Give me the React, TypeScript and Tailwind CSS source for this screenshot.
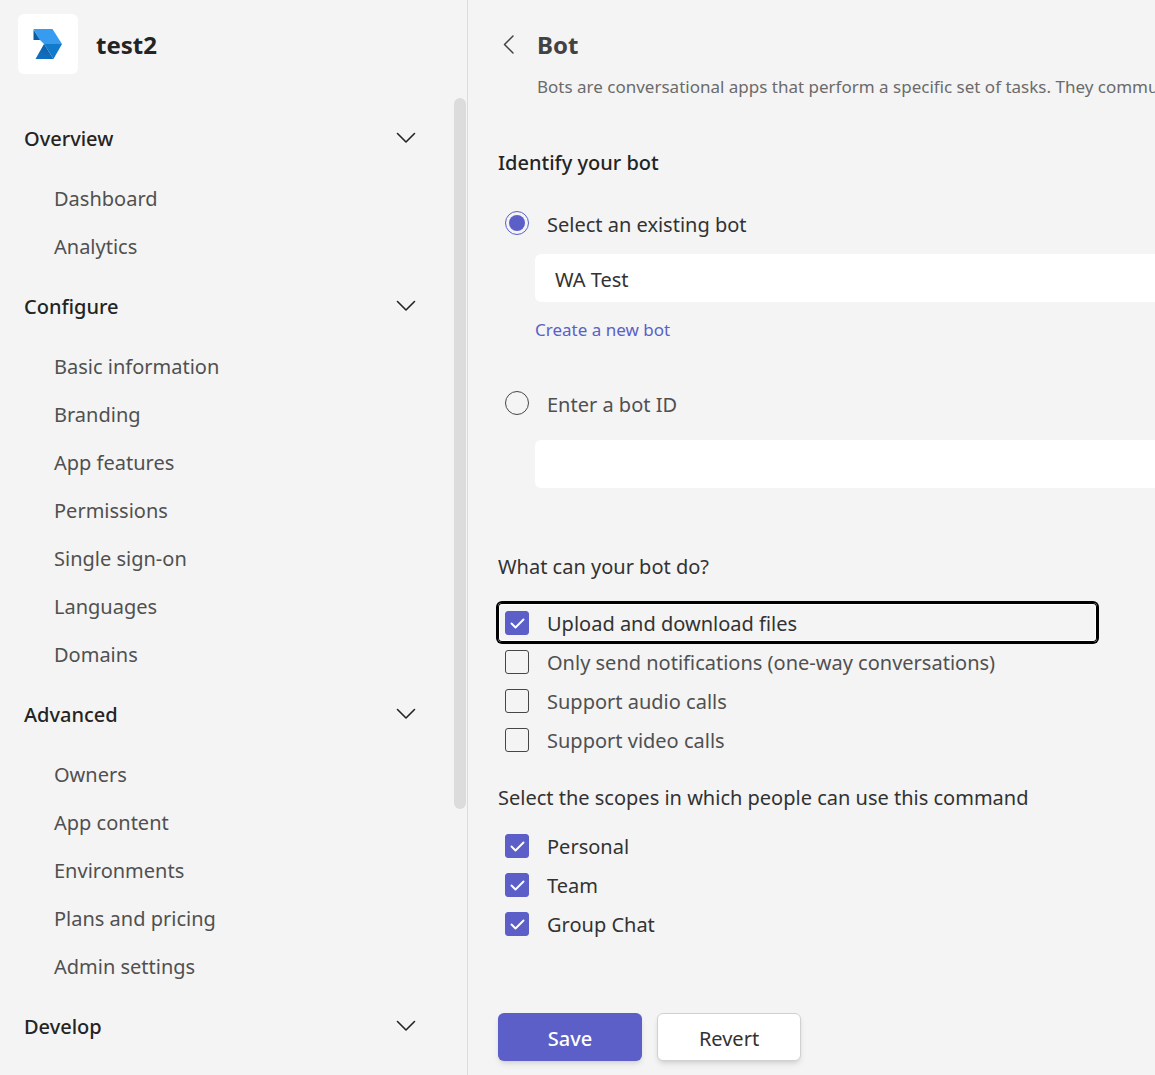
import React, { useState } from "react";

const sections = [
  { title: "Overview", items: ["Dashboard", "Analytics"] },
  {
    title: "Configure",
    items: ["Basic information", "Branding", "App features", "Permissions", "Single sign-on", "Languages", "Domains"],
  },
  { title: "Advanced", items: ["Owners", "App content", "Environments", "Plans and pricing", "Admin settings"] },
  { title: "Develop", items: [] as string[] },
];

function Logo() {
  return (
    <svg width="30" height="30" viewBox="0 0 30 30" aria-hidden="true">
      <defs>
        <linearGradient id="fold" x1="0.6" y1="0" x2="0.2" y2="1">
          <stop offset="0" stopColor="#0b569c" />
          <stop offset="0.5" stopColor="#0f69b8" />
          <stop offset="1" stopColor="#1070c2" />
        </linearGradient>
      </defs>
      <path d="M0.500 0H19.500L29 15H11L6.500 10.500z" fill="#379cf0" />
      <path d="M0.500 0.500L7 11H0.500z" fill="#0b5ba5" />
      <path d="M11 15L2.500 30h18z" fill="url(#fold)" />
      <path d="M11 15h18L20.500 30z" fill="#127acb" />
    </svg>
  );
}

function ChevronDown() {
  return (
    <svg width="20" height="12" viewBox="0 0 20 12" fill="none" stroke="#242424" strokeWidth="1.6" strokeLinecap="round" strokeLinejoin="round" aria-hidden="true">
      <path d="M1.500 1.500L10 10l8.500-8.500" />
    </svg>
  );
}

function CheckRow({ label, initial, focused = false }: { label: string; initial: boolean; focused?: boolean }) {
  const [checked, setChecked] = useState(initial);
  return (
    <label
      className={
        "flex h-[39px] items-center rounded-sm pl-[7px] " +
        (focused ? "shadow-[inset_0_0_0_1px_#000,inset_0_0_0_2px_#fff,0_0_0_2px_#000] " : "") +
        (checked ? "text-[#323232]" : "text-[#505050]")
      }
    >
      <span className="grid size-6 shrink-0">
        <input
          type="checkbox"
          checked={checked}
          onChange={() => setChecked(!checked)}
          className="col-start-1 row-start-1 size-6 appearance-none rounded-[3px] border border-[#484644] checked:border-[#5b5fc7] checked:bg-[#5b5fc7]"
        />
        {checked && (
          <svg className="pointer-events-none col-start-1 row-start-1" width="24" height="24" viewBox="0 0 24 24" fill="none" stroke="#fff" strokeWidth="1.9" strokeLinecap="round" strokeLinejoin="round" aria-hidden="true">
            <path d="M6.500 12.500l4 4 8-8" />
          </svg>
        )}
      </span>
      <span className="ml-[18px] pt-0.5">{label}</span>
    </label>
  );
}

function RadioRow({ label, checked, onSelect }: { label: string; checked: boolean; onSelect: () => void }) {
  return (
    <label className={"flex h-9 items-center pl-[7px] " + (checked ? "text-[#323232]" : "text-[#505050]")}>
      <span className="grid size-6 shrink-0 place-items-center">
        <input
          type="radio"
          name="bot-source"
          checked={checked}
          onChange={onSelect}
          className="col-start-1 row-start-1 size-6 appearance-none rounded-full border-[1px] border-[#484644] checked:border-[#5b5fc7]"
        />
        {checked && <span className="pointer-events-none col-start-1 row-start-1 size-4 rounded-full bg-[#5b5fc7]" />}
      </span>
      <span className="ml-[18px] pt-1">{label}</span>
    </label>
  );
}

export default function App() {
  const [source, setSource] = useState("existing");
  return (
    <div className="flex h-screen overflow-hidden bg-[#f4f4f4] font-['Noto_Sans',sans-serif] text-[20px] leading-7 text-[#242424]">
      <aside className="flex w-[468px] shrink-0 flex-col border-r border-[#dcdcdc]">
        <header className="flex items-center gap-[18px] px-[18px] pt-[14px] pb-6">
          <div className="flex size-[60px] items-center justify-center rounded-md bg-white">
            <Logo />
          </div>
          <h1 className="pt-0.5 text-[24px] font-bold">test2</h1>
        </header>
        <div className="flex min-h-0 flex-1">
          <nav className="min-w-0 flex-1 overflow-hidden pt-1 pr-[38px] pl-6" aria-label="App sections">
            {sections.map((s) => (
              <section key={s.title}>
                <button type="button" className="flex h-[72px] w-full items-center justify-between font-medium">
                  <span className="pt-0.5">{s.title}</span>
                  <ChevronDown />
                </button>
                {s.items.map((item) => (
                  <a key={item} href="#" className="flex h-12 items-center pt-0.5 pl-[30px] text-[#505050]">
                    {item}
                  </a>
                ))}
              </section>
            ))}
          </nav>
          <div className="mr-px h-[711px] w-3 rounded-full bg-[#dcdcdc]" />
        </div>
      </aside>

      <main className="min-w-0 flex-1 overflow-hidden pl-[30px]">
        <div className="flex items-center gap-[22px] pt-[27px] pl-[5px]">
          <button type="button" aria-label="Back" className="flex h-9 w-3 items-center">
            <svg width="12" height="20" viewBox="0 0 12 20" fill="none" stroke="#424242" strokeWidth="1.5" strokeLinecap="round" strokeLinejoin="round" aria-hidden="true">
              <path d="M10 1L1.500 9.500 10 18" />
            </svg>
          </button>
          <h2 className="text-[24px] leading-9 font-bold text-[#424242]">Bot</h2>
        </div>
        <p className="mt-[10px] pl-[39px] text-[17px] leading-7 whitespace-nowrap text-[#6b6b6b]">
          Bots are conversational apps that perform a specific set of tasks. They commun
        </p>

        <h3 className="mt-12 font-medium">Identify your bot</h3>
        <div className="mt-7">
          <RadioRow label="Select an existing bot" checked={source === "existing"} onSelect={() => setSource("existing")} />
        </div>
        <div className="mt-[13px] pl-[37px]">
          <select aria-label="Existing bot" className="block h-12 w-full appearance-none rounded-l-md bg-white pt-1 pl-5 text-[#323232]">
            <option>WA Test</option>
          </select>
          <a href="#" className="mt-[14px] block text-[17px] leading-7 text-[#5b5fc7]">
            Create a new bot
          </a>
        </div>
        <div className="mt-[41px]">
          <RadioRow label="Enter a bot ID" checked={source === "id"} onSelect={() => setSource("id")} />
        </div>
        <div className="mt-[19px] pl-[37px]">
          <input type="text" aria-label="Bot ID" className="block h-12 w-full rounded-l-md bg-white px-5" />
        </div>

        <fieldset className="mt-[65px] max-w-[599px]">
          <legend className="text-[#323232]">What can your bot do?</legend>
          <div className="pt-[22px]">
            <CheckRow label="Upload and download files" initial focused />
            <CheckRow label="Only send notifications (one-way conversations)" initial={false} />
            <CheckRow label="Support audio calls" initial={false} />
            <CheckRow label="Support video calls" initial={false} />
          </div>
        </fieldset>

        <fieldset className="mt-[25px] max-w-[599px]">
          <legend className="text-[#323232]">Select the scopes in which people can use this command</legend>
          <div className="pt-[14px]">
            <CheckRow label="Personal" initial />
            <CheckRow label="Team" initial />
            <CheckRow label="Group Chat" initial />
          </div>
        </fieldset>

        <div className="mt-[70px] flex gap-[15px]">
          <button type="button" className="h-12 w-36 rounded-md bg-[#5b5fc7] pt-1 font-medium text-white shadow-md">
            Save
          </button>
          <button type="button" className="h-12 w-36 rounded-md border border-[#d1d1d1] bg-white pt-1 text-[#323232] shadow-md">
            Revert
          </button>
        </div>
      </main>
    </div>
  );
}
